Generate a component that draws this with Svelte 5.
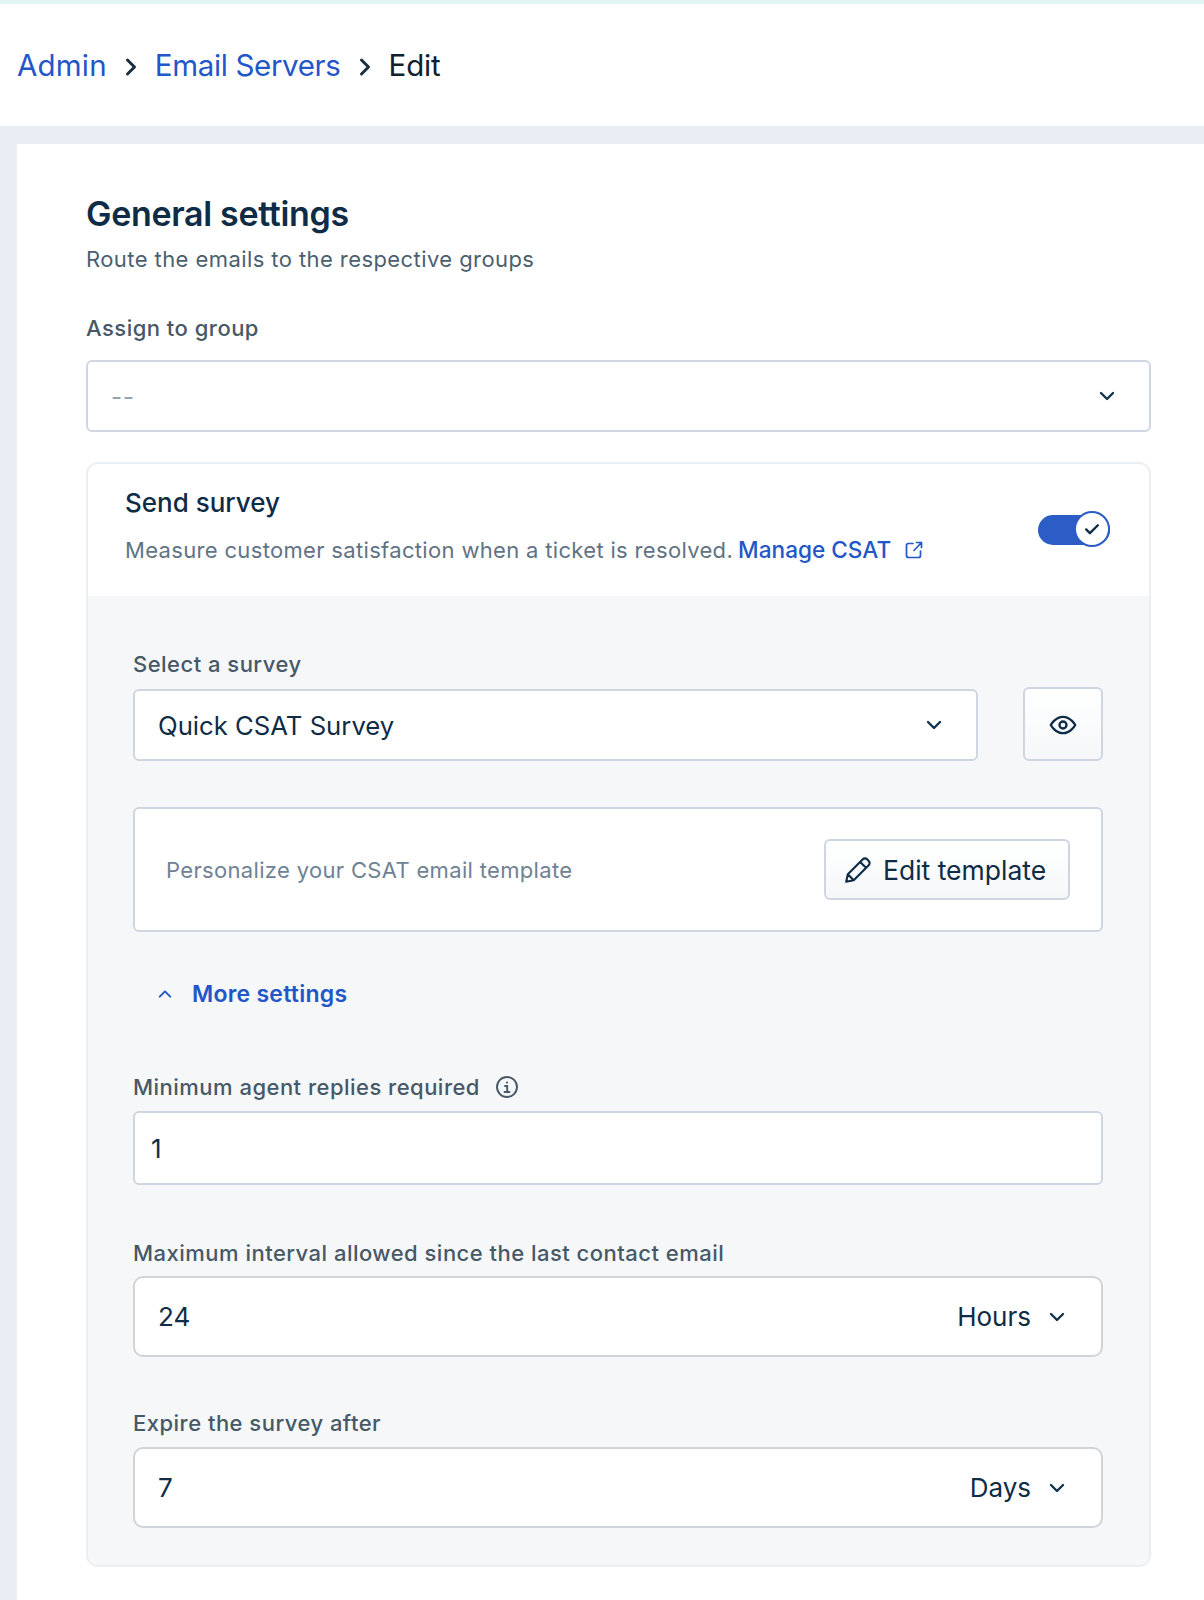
<script>
  const chev = "M6 9l6 6 6-6";
</script>

<div class="page">
  <div class="strip"></div>
  <nav class="crumbs">
    <a class="c1" href="#a">Admin</a>
    <svg class="sep" viewBox="0 0 24 24"><path d="M8.500 5l7 7-7 7" /></svg>
    <a class="c2" href="#b">Email Servers</a>
    <svg class="sep" viewBox="0 0 24 24"><path d="M8.500 5l7 7-7 7" /></svg>
    <span>Edit</span>
  </nav>
  <div class="shell">
    <main class="panel">
      <h1>General settings</h1>
      <p class="sub">Route the emails to the respective groups</p>
      <div class="label top">Assign to group</div>
      <div class="control assign">
        <span class="placeholder">--</span>
        <svg class="chev" viewBox="0 0 24 24"><path d={chev} /></svg>
      </div>

      <section class="card">
        <header class="card-head">
          <div>
            <div class="card-title">Send survey</div>
            <div class="card-desc">
              <span>Measure customer satisfaction when a ticket is resolved.</span>
              <a href="#c">Manage CSAT</a>
              <svg class="ext" viewBox="0 0 20 20"><path d="M9 3.500H4.500a2 2 0 0 0-2 2v10a2 2 0 0 0 2 2h10a2 2 0 0 0 2-2V11M10 10.500 17.500 2.500M12.500 2.500h5v5" /></svg>
            </div>
          </div>
          <div class="toggle">
            <div class="knob">
              <svg viewBox="0 0 24 24"><path d="M5 12.500l4.500 4.500L19 7.500" /></svg>
            </div>
          </div>
        </header>

        <div class="card-body">
          <div class="label">Select a survey</div>
          <div class="survey-row">
            <div class="control survey">
              <span>Quick CSAT Survey</span>
              <svg class="chev" viewBox="0 0 24 24"><path d={chev} /></svg>
            </div>
            <button class="eye" aria-label="Preview">
              <svg viewBox="0 0 24 24"><path d="M1.500 12S5.500 5 12 5s10.500 7 10.500 7-4 7-10.500 7S1.500 12 1.500 12z" /><circle cx="12" cy="12" r="3" /></svg>
            </button>
          </div>

          <div class="template">
            <span>Personalize your CSAT email template</span>
            <button class="edit">
              <svg viewBox="0 0 28 28"><path d="M3 25l1.500-7L18.500 4a2.800 2.800 0 0 1 4 0l1.500 1.500a2.800 2.800 0 0 1 0 4L10 23.500zM4.500 18l5.500 5.500M16 6.500l5.500 5.500" /></svg>
              Edit template
            </button>
          </div>

          <div class="more">
            <svg viewBox="0 0 24 24"><path d="M5 15.500l7-7 7 7" /></svg>
            <span>More settings</span>
          </div>

          <div class="label info-label">
            Minimum agent replies required
            <svg class="info" viewBox="0 0 24 24"><circle cx="12" cy="12" r="10" /><path d="M10 11h2.200v6M9.500 17h5" /><circle class="dot" cx="12" cy="7.500" r="1.100" /></svg>
          </div>
          <div class="control number"><span>1</span></div>

          <div class="label gap1">Maximum interval allowed since the last contact email</div>
          <div class="control unit hours">
            <span>24</span>
            <span class="unit-value">Hours <svg class="chev" viewBox="0 0 24 24"><path d={chev} /></svg></span>
          </div>

          <div class="label gap2">Expire the survey after</div>
          <div class="control unit days">
            <span>7</span>
            <span class="unit-value">Days <svg class="chev" viewBox="0 0 24 24"><path d={chev} /></svg></span>
          </div>
        </div>
      </section>
    </main>
  </div>
</div>

<style>
  :global(body) { margin: 0; background: #fff; }
  .page {
    width: 1204px;
    height: 1600px;
    overflow: hidden;
    font-family: Inter, "Liberation Sans", sans-serif;
    color: #0f2c47;
    display: flex;
    flex-direction: column;
  }
  a { color: #2256c9; text-decoration: none; }
  svg { fill: none; stroke: currentColor; stroke-linecap: round; stroke-linejoin: round; display: block; }

  .strip { height: 4px; background: #e1f5f3; flex: none; }
  .crumbs {
    height: 122px;
    flex: none;
    display: flex;
    align-items: center;
    padding: 0 0 0 17px;
    font-size: 29.500px;
    letter-spacing: -0.2px;
    box-sizing: border-box;
    color: #12202e;
  }
  .c1 { letter-spacing: 0.2px; }
  .c2 { letter-spacing: -0.35px; }
  .sep { width: 24px; height: 24px; margin: 3px 12px 0 12px; stroke-width: 3; color: #1b2f40; }

  .shell { flex: 1; background: #e9edf4; padding: 18px 0 0 17px; }
  .panel { background: #fff; height: 100%; padding: 48px 53px 0 69px; box-sizing: border-box; }

  h1 {
    margin: 0;
    font-size: 34px;
    line-height: 44px;
    font-weight: 600;
    letter-spacing: -0.32px;
    color: #0f2c47;
  }
  .sub { margin: 8px 0 0; font-size: 22px; line-height: 30px; color: #4b5f70; letter-spacing: 0.42px; }
  .label { font-size: 22px; line-height: 30px; font-weight: 500; color: #475867; letter-spacing: 0.48px; }
  .label.top { margin-top: 39px; }

  .control {
    box-sizing: border-box;
    background: #fff;
    border: 2px solid #cdd6e1;
    border-radius: 6px;
    display: flex;
    align-items: center;
    justify-content: space-between;
    font-size: 26px;
    color: #0f2c47;
  }
  .chev { width: 24px; height: 24px; stroke-width: 2.400; color: #12344d; }

  .assign { height: 72px; margin-top: 17px; padding: 0 30px 0 23px; }
  .placeholder { color: #92a2b1; font-size: 24px; letter-spacing: 1px; }

  .card {
    margin-top: 30px;
    height: 1105px;
    box-sizing: border-box;
    border: 2px solid #ebeff3;
    border-radius: 12px;
    overflow: hidden;
    display: flex;
    flex-direction: column;
  }
  .card-head {
    height: 132px;
    flex: none;
    box-sizing: border-box;
    display: flex;
    align-items: flex-start;
    justify-content: space-between;
    padding: 21px 39px 0 37px;
  }
  .card-title { font-size: 26px; line-height: 36px; font-weight: 500; color: #0f2c47; }
  .card-desc { display: flex; align-items: center; margin-top: 13px; font-size: 22px; line-height: 32px; color: #5f7385; letter-spacing: 0.33px; white-space: nowrap; }
  .card-desc a { font-weight: 500; margin-left: 5px; font-size: 22.600px; letter-spacing: 0; }
  .ext { width: 20px; height: 20px; margin-left: 13px; stroke-width: 1.700; color: #2256c9; }

  .toggle {
    width: 72px;
    height: 30px;
    margin-top: 30px;
    background: #2c5cc5;
    border-radius: 15px;
    position: relative;
  }
  .knob {
    position: absolute;
    right: 0;
    top: -4px;
    width: 36px;
    height: 36px;
    box-sizing: border-box;
    background: #fff;
    border: 2px solid #2c5cc5;
    border-radius: 50%;
    display: flex;
    align-items: center;
    justify-content: center;
  }
  .knob svg { width: 20px; height: 20px; stroke-width: 2.800; }

  .card-body { flex: 1; background: #f5f7f9; padding: 53px 46px 0 45px; }

  .survey-row { display: flex; justify-content: space-between; align-items: flex-end; margin-top: 8px; }
  .survey { width: 845px; height: 72px; padding: 0 30px 0 23px; font-size: 25.700px; }
  .eye {
    width: 80px;
    height: 74px;
    padding: 0;
    box-sizing: border-box;
    border: 2px solid #cdd6e1;
    border-radius: 6px;
    background: linear-gradient(#fff, #f5f7f9);
    display: flex;
    align-items: center;
    justify-content: center;
    color: #0f2c47;
  }
  .eye svg { width: 28px; height: 28px; stroke-width: 2; margin-top: 1px; }

  .template {
    margin-top: 46px;
    height: 125px;
    box-sizing: border-box;
    background: #fff;
    border: 2px solid #cdd6e1;
    border-radius: 6px;
    display: flex;
    align-items: center;
    justify-content: space-between;
    padding: 0 31px 0 31px;
    font-size: 22px;
    letter-spacing: 0.33px;
    color: #6f8293;
  }
  .edit {
    width: 246px;
    height: 61px;
    box-sizing: border-box;
    border: 2px solid #cdd6e1;
    border-radius: 6px;
    background: linear-gradient(#fff, #f5f7f9);
    display: flex;
    align-items: center;
    gap: 10px;
    padding: 0 0 0 17px;
    font-family: inherit;
    font-size: 26.500px;
    letter-spacing: 0;
    color: #0f2c47;
  }
  .edit svg { width: 30px; height: 30px; stroke-width: 2; flex: none; }

  .more {
    display: flex;
    align-items: center;
    margin: 46px 0 0 23px;
    height: 32px;
    color: #2256c9;
    font-size: 23px;
    letter-spacing: 0.25px;
    font-weight: 600;
    gap: 18px;
  }
  .more svg { width: 18px; height: 18px; stroke-width: 2.600; }

  .info-label { display: flex; align-items: center; margin-top: 62px; gap: 15px; }
  .info { width: 24px; height: 24px; stroke-width: 1.900; color: #475867; }
  .info .dot { fill: currentColor; stroke: none; }

  .number { margin-top: 9px; height: 74px; padding: 0 16px; }
  .gap1 { margin-top: 53px; }
  .gap2 { margin-top: 51px; }
  .unit { height: 81px; padding: 0 32px 0 23px; border-radius: 10px; border-color: #d0d4d8; }
  .hours { margin-top: 8px; }
  .days { margin-top: 9px; }
  .unit-value { display: flex; align-items: center; gap: 14px; }
</style>
